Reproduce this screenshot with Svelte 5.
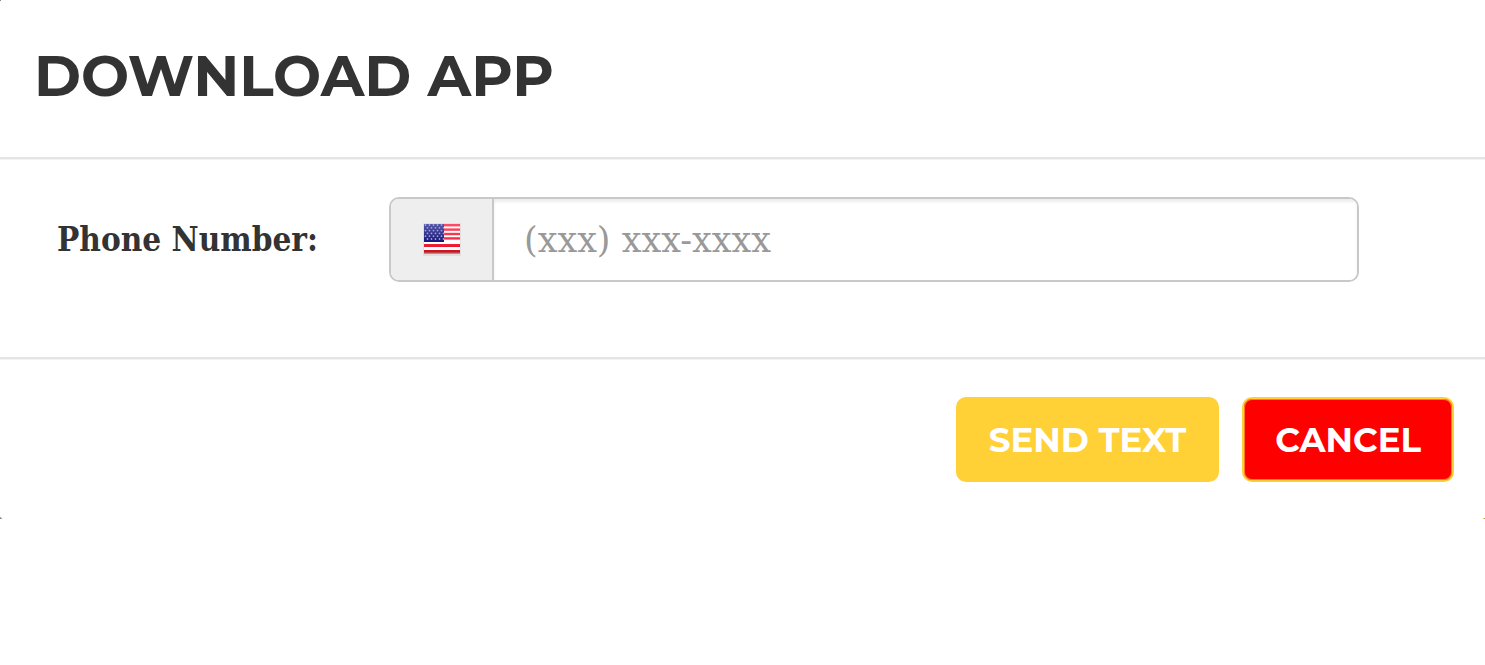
<script>
  let phone = $state('');
  const stars = [0, 1, 2, 3, 4, 5].flatMap((row) =>
    [0, 1, 2, 3, 4].map((col) => ({ x: 2.5 + col * 4 + (row % 2) * 2, y: 2 + row * 2.8 }))
  );
</script>

<form class="dialog" onsubmit={(e) => e.preventDefault()}>
  <header><h1>DOWNLOAD APP</h1></header>
  <div class="body">
    <label for="phone">Phone Number:</label>
    <div class="group">
      <span class="addon">
        <svg width="40" height="36" viewBox="0 0 40 36" role="img" aria-label="United States">
          <defs>
            <linearGradient id="canton" x1="0" y1="0" x2="0" y2="1">
              <stop offset="0" stop-color="#5456a8" />
              <stop offset="1" stop-color="#15147c" />
            </linearGradient>
            <linearGradient id="stripe" gradientUnits="userSpaceOnUse" x1="0" y1="0" x2="0" y2="30">
              <stop offset="0" stop-color="#ff5068" />
              <stop offset="0.7" stop-color="#f8203c" />
              <stop offset="1" stop-color="#d0101c" />
            </linearGradient>
          </defs>
          <rect x="1" y="1" width="38" height="33" rx="1" fill="#e2dede" />
          <rect x="2" y="2" width="36" height="29" fill="#fff" />
          <g fill="url(#stripe)">
            <rect x="2" y="2" width="36" height="2.400" />
            <rect x="2" y="6.400" width="36" height="2.400" />
            <rect x="2" y="10.800" width="36" height="2.400" />
            <rect x="2" y="15.200" width="36" height="2.400" />
            <rect x="2" y="22" width="36" height="3" />
            <rect x="2" y="28" width="36" height="2.700" />
          </g>
          <rect x="2" y="30.500" width="36" height="1" fill="#93383c" />
          <rect x="2" y="2" width="20" height="18" fill="url(#canton)" />
          <g fill="#a3a5d2" transform="translate(1 1)">
            {#each stars as s}<circle cx={s.x} cy={s.y} r="0.900" />{/each}
          </g>
        </svg>
      </span>
      <input id="phone" type="tel" placeholder="(xxx) xxx-xxxx" bind:value={phone} />
    </div>
  </div>
  <footer>
    <button class="send" type="submit">SEND TEXT</button>
    <button class="cancel" type="button">CANCEL</button>
  </footer>
</form>

<style>
  :global(body) { background: #fff; }
  .dialog {
    color: #333;
    background:
      radial-gradient(circle at 100% 0, #fff 12px, #888 13px) 0 100% / 10px 10px no-repeat,
      linear-gradient(90deg, #e8d9a0, #a58a30) 100% 100% / 2px 1px no-repeat,
      linear-gradient(#888, #888) 0 0 / 1px 1px no-repeat,
      #fff;
  }
  header { padding: 34px 34px 39px; border-bottom: 2px solid #e4e4e4; box-shadow: 0 1px #f3f3f3; }
  h1 { margin: 0; font: 700 57px/84px Montserrat, Inter, sans-serif; }
  .body { display: flex; align-items: center; padding: 38px 126px 75px 57px; border-bottom: 2px solid #e4e4e4; box-shadow: 0 1px #f3f3f3; }
  label { flex: 0 0 332px; font: 700 33px/48px "Roboto Slab", "DejaVu Serif Condensed", "DejaVu Serif", serif; }
  .group { flex: 1; display: flex; height: 85px; box-sizing: border-box; border: 2px solid #c8c8c8; border-radius: 10px; overflow: hidden; }
  .addon { display: flex; align-items: center; justify-content: center; width: 101px; background: #eee; border-right: 2px solid #c8c8c8; }
  input { flex: 1; min-width: 0; border: 0; outline: 0; padding: 0 30px; font: 400 35px/48px "Roboto Slab", "DejaVu Serif", serif; color: #555; box-shadow: inset 0 3px 3px rgba(0, 0, 0, 0.075); }
  input::placeholder { color: #999; opacity: 1; }
  footer { display: flex; justify-content: flex-end; gap: 23px; padding: 38px 31px 37px; }
  button { height: 85px; padding: 0 31px; border: 2px solid #ffd137; border-radius: 10px; color: #fff; font: 700 34px/48px Montserrat, Inter, sans-serif; }
  .send { background: #ffd137; }
  .cancel { background: #f00; box-shadow: inset 0 0 0 1px #ff7a1a; }
</style>
